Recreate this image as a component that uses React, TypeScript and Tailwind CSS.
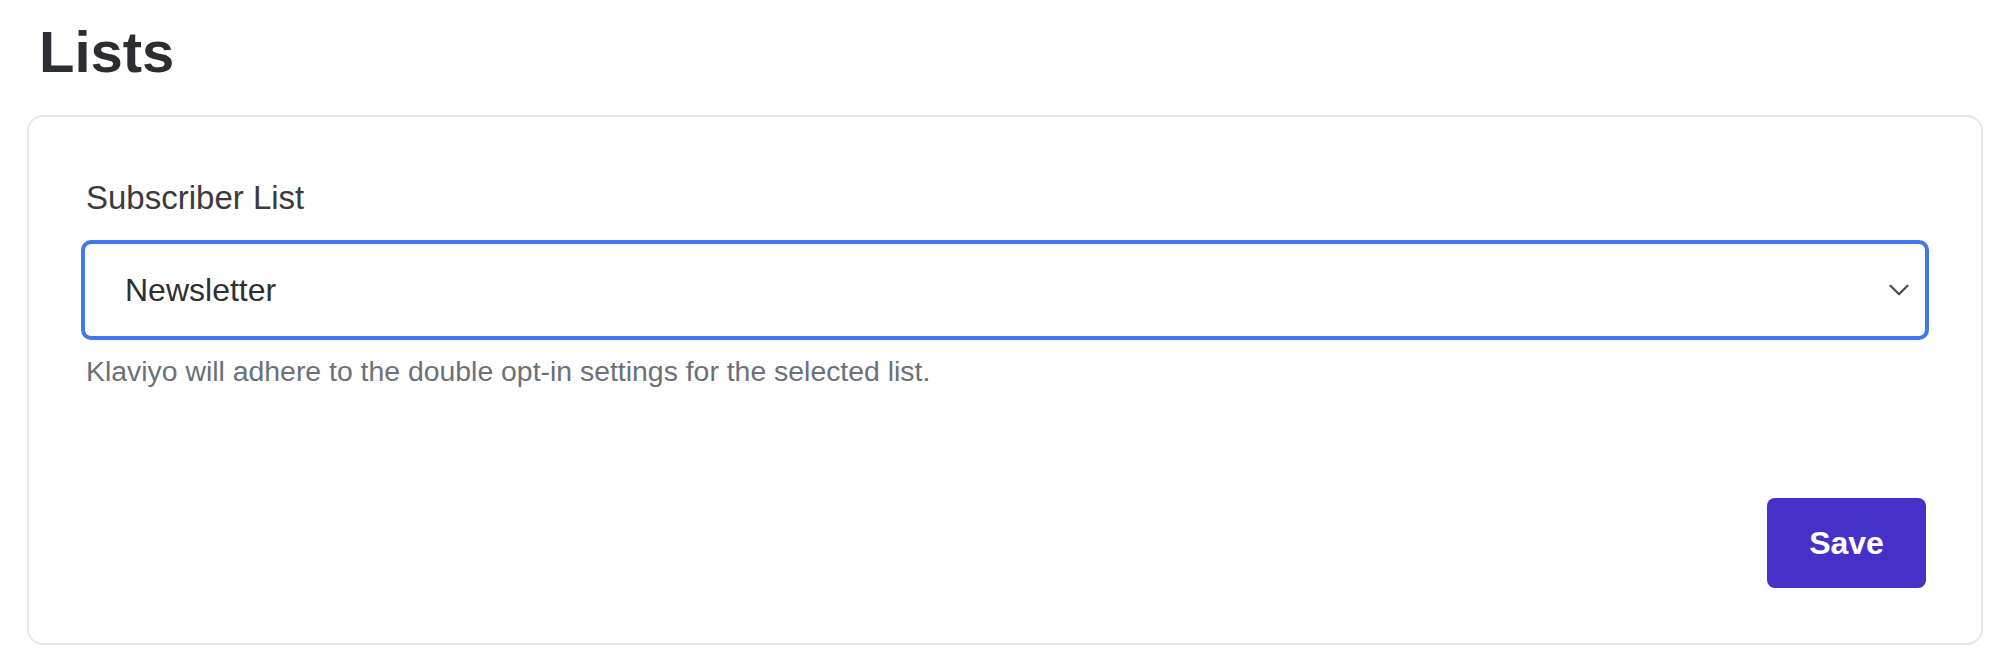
import { ChevronDown } from "lucide-react";

export default function App() {
  return (
    <div className="min-h-[658px] w-[2000px] bg-white font-['Liberation_Sans',Arial,sans-serif]">
      <div className="pt-[23px] pl-[39px]">
        <h1 className="text-[58px] leading-[58px] font-bold text-[#2c2e33]">Lists</h1>
      </div>
      <div className="mt-[34px] mr-[17px] ml-[27px] h-[530px] rounded-[16px] border-2 border-[#e8e8e8] bg-white px-[52px] pt-[64px] pb-[55px]">
        <div className="flex h-full flex-col">
          <label className="pl-[5px] text-[33px] leading-[33px] text-[#3b3b3d]">Subscriber List</label>
          <div className="mt-[26px] flex h-[100px] items-center justify-between rounded-[10px] border-4 border-[#4378e8] bg-white pr-[9px] pl-[40px]">
            <span className="text-[32px] leading-[32px] text-[#2f2f31]">Newsletter</span>
            <ChevronDown className="h-[34px] w-[34px] text-[#4a4a4c]" strokeWidth={1.6} />
          </div>
          <p className="mt-[17px] pl-[5px] text-[28.4px] leading-[28px] text-[#6c7079]">
            Klaviyo will adhere to the double opt-in settings for the selected list.
          </p>
          <div className="mt-auto flex justify-end">
            <button className="mr-[3px] flex h-[90px] w-[159px] items-center justify-center rounded-[8px] bg-[#4530c8] text-[32px] leading-[32px] font-bold text-white">
              Save
            </button>
          </div>
        </div>
      </div>
    </div>
  );
}
